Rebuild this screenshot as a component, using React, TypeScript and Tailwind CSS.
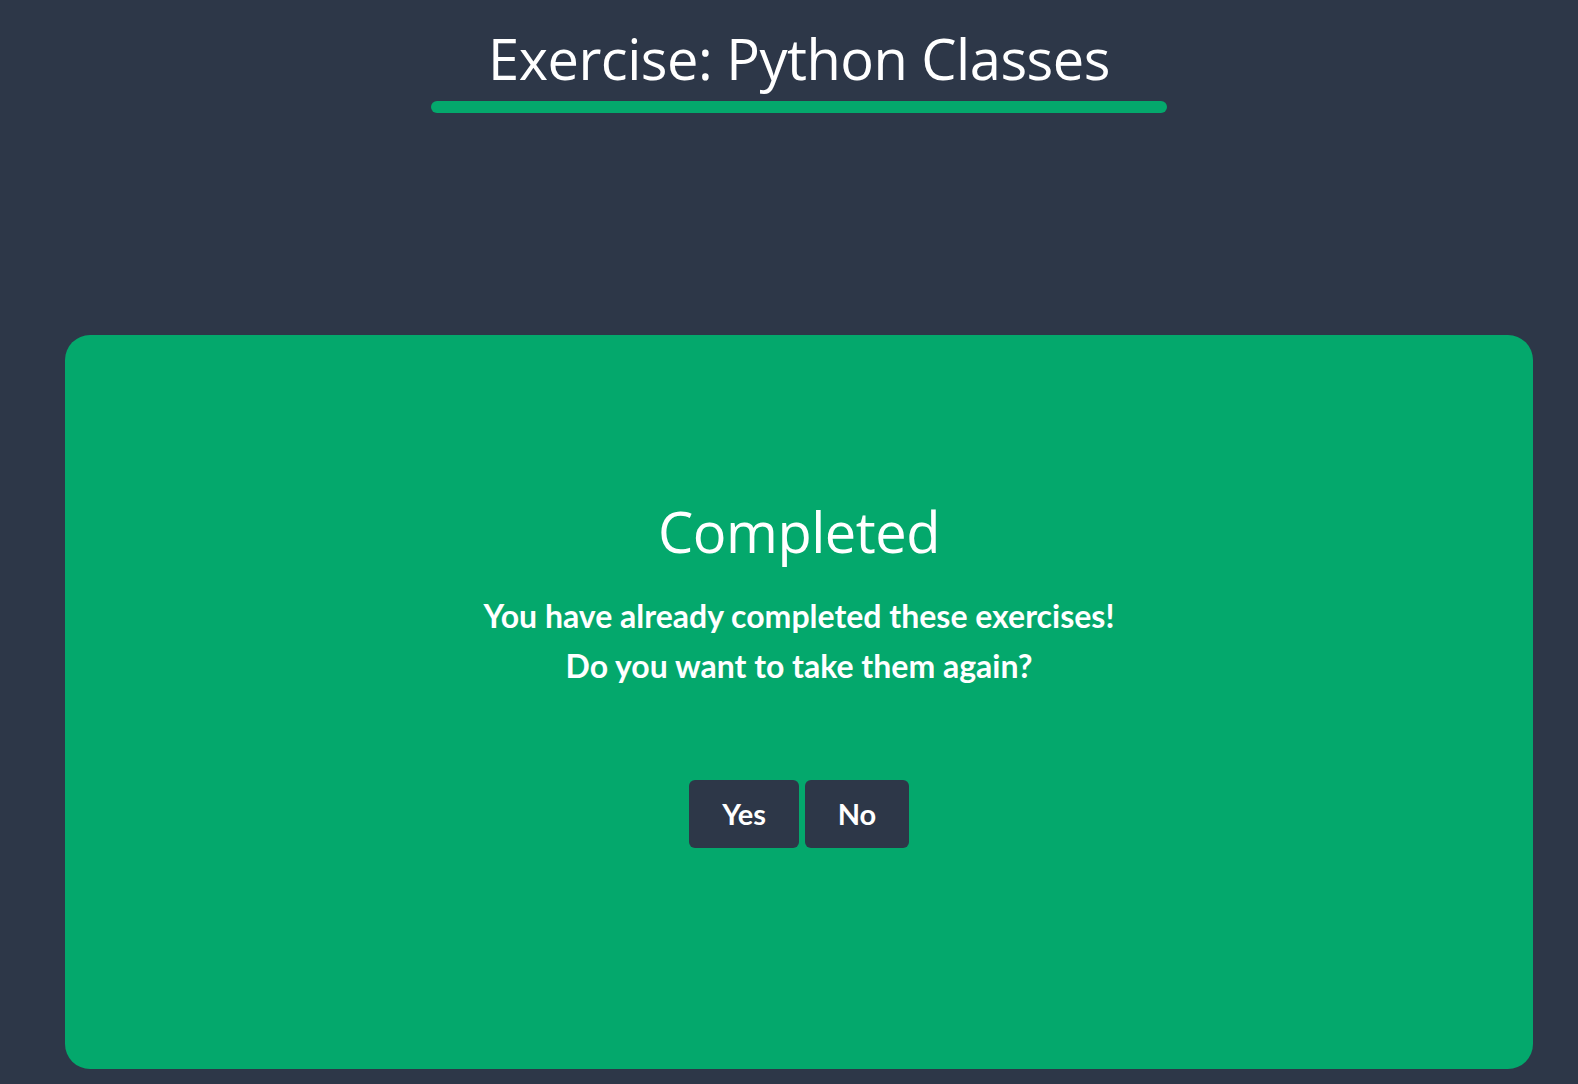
export default function App() {
  return (
    <div className="min-h-screen w-full bg-[#2d3748] pt-[22px] pb-[15px]" style={{ fontFamily: '"Open Sans", sans-serif' }}>
      <div className="flex flex-col items-center pl-[20px]">
        <h1 className="text-[56px] leading-[72px] font-normal text-white tracking-[-0.5px]">Exercise: Python Classes</h1>
        <div className="mt-[7px] h-[12px] w-[736px] rounded-full bg-[#04a86c]" />
      </div>
      <div className="mt-[222px] ml-[65px] mr-[45px] h-[734px] rounded-[25px] bg-[#04a86c] flex flex-col items-center pt-[160px]">
        <h2 className="text-[56px] leading-[72px] text-white tracking-[-0.5px]">Completed</h2>
        <div className="mt-[24px] flex flex-col items-center text-white font-bold text-[32px] leading-[50px]" style={{ fontFamily: 'Lato, sans-serif' }}>
          <p>You have already completed these exercises!</p>
          <p>Do you want to take them again?</p>
        </div>
        <div className="mt-[89px] flex gap-[6px]" style={{ fontFamily: 'Lato, sans-serif' }}>
          <button className="h-[68px] w-[110px] rounded-[6px] bg-[#2d3748] text-white font-bold text-[29px]">Yes</button>
          <button className="h-[68px] w-[104px] rounded-[6px] bg-[#2d3748] text-white font-bold text-[29px]">No</button>
        </div>
      </div>
    </div>
  );
}
